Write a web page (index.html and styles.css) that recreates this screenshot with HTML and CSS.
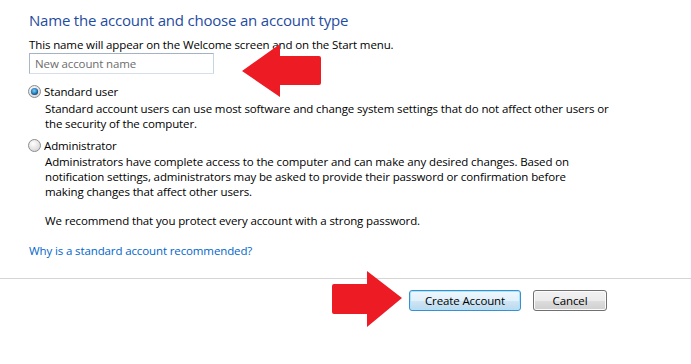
FILE: index.html
```html
<!DOCTYPE html>
<html lang="en">
<head>
    <meta charset="UTF-8">
    <title>Create New Account</title>
    <link rel="stylesheet" href="styles.css">
</head>
<body>
    <div class="page">
        <div class="content">
            <h1>Name the account and choose an account type</h1>
            <p class="hint">This name will appear on the Welcome screen and on the Start menu.</p>
            <input class="name-box" type="text" placeholder="New account name">

            <div class="option">
                <label class="option-label">
                    <svg class="radio" width="13" height="13" viewBox="0 0 13 13">
                        <defs>
                            <radialGradient id="rb" cx="40%" cy="35%" r="70%">
                                <stop offset="0" stop-color="#ffffff"/>
                                <stop offset="1" stop-color="#d4d4d4"/>
                            </radialGradient>
                            <radialGradient id="dot" cx="45%" cy="40%" r="60%">
                                <stop offset="0" stop-color="#7fd0f5"/>
                                <stop offset="0.6" stop-color="#2f86c4"/>
                                <stop offset="1" stop-color="#0e3e6f"/>
                            </radialGradient>
                        </defs>
                        <circle cx="6.5" cy="6.5" r="6" fill="url(#rb)" stroke="#8b8d8f"/>
                        <circle cx="6.5" cy="6.5" r="3.6" fill="url(#dot)"/>
                    </svg>
                    Standard user
                </label>
                <p class="desc">Standard account users can use most software and change system settings that do not affect other users or<br>the security of the computer.</p>
            </div>

            <div class="option admin">
                <label class="option-label">
                    <svg class="radio" width="13" height="13" viewBox="0 0 13 13">
                        <circle cx="6.5" cy="6.5" r="6" fill="url(#rb)" stroke="#8b8d8f"/>
                    </svg>
                    Administrator
                </label>
                <p class="desc">Administrators have complete access to the computer and can make any desired changes. Based on<br>notification settings, administrators may be asked to provide their password or confirmation before<br>making changes that affect other users.</p>
                <p class="desc recommend">We recommend that you protect every account with a strong password.</p>
            </div>

            <a class="why" href="#">Why is a standard account recommended?</a>
        </div>

        <div class="footer">
            <button class="btn btn-default">Create Account</button>
            <button class="btn">Cancel</button>
        </div>

        <!-- red annotation arrows drawn over the dialog -->
        <svg class="arrows" width="691" height="364" viewBox="0 0 691 364">
            <path d="M242 71 L280 44 L280 56 L319 56 Q321 56 321 58 L321 83 Q321 85 319 85 L280 85 L280 97 Z" fill="#ed1c24"/>
            <path d="M402 298 L367 271 L367 284 L334 284 Q332 284 332 286 L332 312 Q332 314 334 314 L367 314 L367 327 Z" fill="#ed1c24"/>
        </svg>
    </div>
</body>
</html>
```

FILE: styles.css
```css
body {
    margin: 0;
    background: #ffffff;
    font-family: "Open Sans", "Noto Sans", sans-serif;
    font-size: 11.5px;
    color: #000000;
}
.page {
    position: relative;
    width: 691px;
    height: 364px;
    overflow: hidden;
}
.content {
    padding-left: 29px;
}
h1 {
    margin: 0;
    padding-top: 8px;
    font-size: 15px;
    font-weight: normal;
    line-height: 24px;
    color: #1f4c9f;
    letter-spacing: -0.2px;
    white-space: nowrap;
}
.hint {
    margin: 5px 0 0;
    line-height: 15px;
    letter-spacing: -0.12px;
    white-space: nowrap;
}
.name-box {
    display: block;
    box-sizing: border-box;
    margin-top: 1px;
    width: 185px;
    height: 21px;
    padding: 0 5px;
    border: 1px solid;
    border-color: #a4b3c4 #c9d6e2 #d6e0ea #a9b8c8;
    font-family: inherit;
    font-size: 11.5px;
    letter-spacing: -0.12px;
    outline: none;
}
.name-box::placeholder {
    color: #6d6d6d;
}
.option {
    margin-top: 10px;
}
.option.admin {
    margin-top: 7px;
}
.option-label {
    display: flex;
    align-items: center;
    height: 15px;
    line-height: 15px;
    letter-spacing: -0.12px;
}
.radio {
    margin: 0 3px 0 -1px;
}
.desc {
    margin: 2px 0 0 16px;
    line-height: 15px;
    letter-spacing: -0.12px;
    white-space: nowrap;
}
.admin .desc {
    margin-top: 1px;
}
.admin .recommend {
    margin-top: 14px;
}
.why {
    display: block;
    margin-top: 15px;
    line-height: 15px;
    color: #0066cc;
    text-decoration: none;
    letter-spacing: -0.12px;
}
.footer {
    margin-top: 20px;
    border-top: 1px solid #d5d5d5;
    padding: 11px 84px 0 0;
    display: flex;
    justify-content: flex-end;
    gap: 12px;
}
.btn {
    box-sizing: border-box;
    height: 21px;
    min-width: 74px;
    padding: 0 10px;
    border: 1px solid #707070;
    border-radius: 3px;
    background: linear-gradient(#f2f2f2 0%, #ebebeb 50%, #dddddd 51%, #cfcfcf 100%);
    box-shadow: inset 0 0 0 1px #fbfbfb;
    font-family: inherit;
    font-size: 11.5px;
    letter-spacing: -0.12px;
    color: #000000;
}
.btn-default {
    width: 112px;
    border-color: #3c8fcf;
    background: linear-gradient(#eef7fd 0%, #e1f0fa 50%, #cfe6f5 51%, #bcd9ee 100%);
    box-shadow: inset 0 0 0 1px #a8e4fb;
}
.arrows {
    position: absolute;
    left: 0;
    top: 0;
    pointer-events: none;
}
```
